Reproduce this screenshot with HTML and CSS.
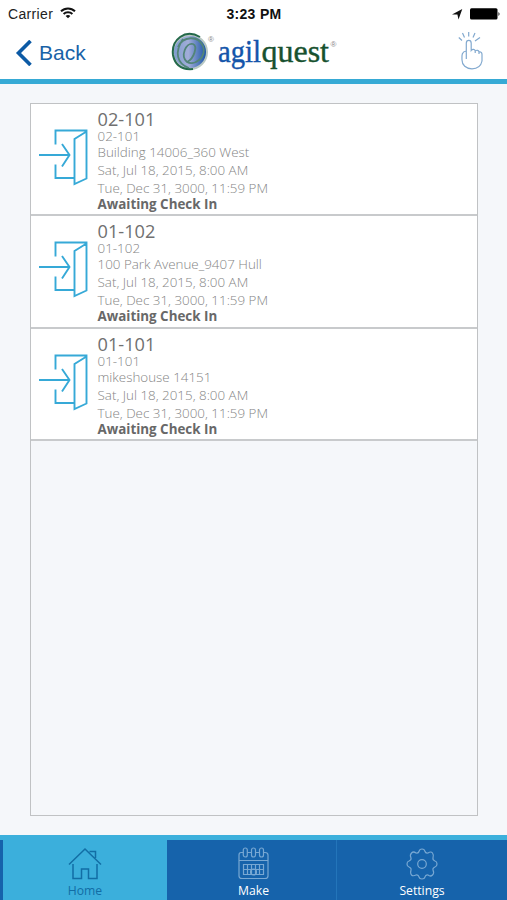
FILE: index.html
```html
<!DOCTYPE html>
<html lang="en">
<head>
<meta charset="utf-8">
<title>Reservations</title>
<link rel="stylesheet" href="styles.css">
</head>
<body>
<svg width="0" height="0" class="defs" aria-hidden="true">
  <symbol id="door" viewBox="0 0 52 60">
    <path d="M17.500 16.500V2.500H48.500V50.500L36.500 56V11L48.500 3.500M17.500 36.500V50H36M1 27H31M24 16L31.500 27L24 38.500"/>
  </symbol>
</svg>
<div class="app">
  <header class="header">
    <div class="status">
      <div class="carrier"><span>Carrier</span>
        <svg width="16" height="12" viewBox="0 0 16 12" fill="none" stroke="#111" stroke-width="2"><path d="M1 4.300C5 .4 11 .4 15 4.300M3.600 7C6 4.700 10 4.700 12.400 7"/><path d="M8 11.300L5.600 9C7 7.800 9 7.800 10.400 9Z" fill="#111" stroke="none"/></svg>
      </div>
      <div class="clock">3:23 PM</div>
      <div class="power">
        <svg width="48" height="14" viewBox="0 0 48 14"><path d="M0 7.400L10.300 2L6.500 12.500L5.400 7.600Z" fill="#111"/><rect x="18" y="1.200" width="27.500" height="11.300" rx="1.500"/><path d="M46.500 5Q48.500 7 46.500 9Z"/></svg>
      </div>
    </div>
    <nav class="nav">
      <a class="back"><svg width="17" height="26" viewBox="0 0 17 26"><path d="M15.500 1L3.500 13L15.500 25" fill="none" stroke="#0c5aa5" stroke-width="3.600"/></svg><span>Back</span></a>
      <svg class="logo" width="170" height="44" viewBox="0 0 170 44">
        <defs><linearGradient id="orb"><stop offset="0" stop-color="#7c9bce"/><stop offset=".45" stop-color="#a2add9"/><stop offset="1" stop-color="#1450a4"/></linearGradient></defs>
        <circle cx="20" cy="22" r="17" fill="url(#orb)" stroke="#b8c8c3" stroke-width="2"/>
        <path d="M30 7C15-2 1 10 3 25C5 35 12 40 23 39" fill="none" stroke="#24694a" stroke-width="2"/>
        <path d="M8 17C13 6 28 5 33 16C37 28 24 36 17 32C10 26 16 12 23 14C28 16 24 29 17 32M13 9C4 22 7 34 19 38" fill="none" stroke="#528578" stroke-width="1.800"/>
        <text class="reg" x="38" y="12">®</text>
        <text class="wordmark" y="32"><tspan x="48" textLength="43" lengthAdjust="spacingAndGlyphs" fill="#1455aa" stroke="#1455aa">agil</tspan><tspan x="91.500" textLength="67.500" lengthAdjust="spacingAndGlyphs" fill="#17512f" stroke="#17512f">quest</tspan></text>
        <text class="reg" x="160.500" y="17">®</text>
      </svg>
      <svg class="tap" width="26" height="40" viewBox="0 0 26 40"><path d="M8.300 28V12.200C8.300 8.500 13.200 8.500 13.200 12.200V19.500C14.500 17.800 17 18 17.200 20C19 18.600 20.800 19.400 21 21C23 20.500 24 21.700 24 23.500V30C23 35 19 37.800 14 37.800C8 37.800 4 34 4 29C4 25 3 21 8.300 20M17.200 20V22M21 21V23M10.700 5.500V1M6.500 6.500L4.500 2M15 6.500L17 2M4 9.500L.8 6.500M17 10L22 6.500"/></svg>
    </nav>
  </header>
  <main class="content">
    <ul class="list">
      <li class="row"><svg class="door"><use href="#door"/></svg><div class="info"><h2>02-101</h2><p class="sub">02-101</p><p>Building 14006_360 West</p><p>Sat, Jul 18, 2015, 8:00 AM</p><p>Tue, Dec 31, 3000, 11:59 PM</p><strong>Awaiting Check In</strong></div></li>
      <li class="row"><svg class="door"><use href="#door"/></svg><div class="info"><h2>01-102</h2><p class="sub">01-102</p><p>100 Park Avenue_9407 Hull</p><p>Sat, Jul 18, 2015, 8:00 AM</p><p>Tue, Dec 31, 3000, 11:59 PM</p><strong>Awaiting Check In</strong></div></li>
      <li class="row"><svg class="door"><use href="#door"/></svg><div class="info"><h2>01-101</h2><p class="sub">01-101</p><p>mikeshouse 14151</p><p>Sat, Jul 18, 2015, 8:00 AM</p><p>Tue, Dec 31, 3000, 11:59 PM</p><strong>Awaiting Check In</strong></div></li>
    </ul>
  </main>
  <footer class="tabs">
    <a class="tab active"><svg width="34" height="34" viewBox="0 0 34 34"><path d="M1 17.500L17 2L33 17.500M5 17V31.500H13.500V22H20.500V31.500H29V17M21.500 4.500H27.500V11"/></svg><span>Home</span></a>
    <a class="tab make"><svg width="34" height="34" viewBox="0 0 34 34"><path d="M6.500 5.500H4Q2 5.500 2 8V29Q2 31.500 5 31.500H28Q31 31.500 31 29V8Q31 5.500 28 5.500H26.500M10 5.500H14.500M18.500 5.500H22.500M2 13.500H31"/><rect x="6.300" y="1" width="4" height="9" rx="2"/><rect x="14.500" y="1" width="4" height="9" rx="2"/><rect x="22.500" y="1" width="4" height="9" rx="2"/><path d="M6.500 17.500H26.500V27.500H6.500ZM6.500 22.500H26.500M10.500 17.500V27.500M14.500 17.500V27.500M18.500 17.500V27.500M22.500 17.500V27.500"/><circle cx="16.500" cy="25" r="3"/></svg><span>Make</span></a>
    <a class="tab settings"><svg width="34" height="34" viewBox="0 0 34 34"><path d="M14 4.500Q14.500 2 17 2T20 4.500Q20.500 6.500 23 6Q26 4 27.500 6T28 11Q27.500 13 30 14Q32 14.500 32 17T30 20Q27.500 21 28 23Q29.500 26 27.500 28T23 28Q20.500 27.500 20 30Q19.500 32 17 32T14 30Q13.500 27.500 11 28Q8 29.500 6.500 28T6 23Q6.500 21 4 20Q2 19.500 2 17T4 14Q6.500 13 6 11Q4.500 8 6.500 6T11 6Q13.500 6.500 14 4.500Z"/><circle cx="17" cy="17" r="4.300"/></svg><span>Settings</span></a>
  </footer>
</div>
</body>
</html>
```
FILE: styles.css
```css
* { box-sizing: border-box; }
body { margin: 0; background: #f5f7fa; font-family: "Open Sans", sans-serif; }
.defs { display: block; height: 0; }
.app { width: 507px; height: 900px; display: flex; flex-direction: column; overflow: hidden; }
.header { height: 84px; flex: none; background: #fff; border-bottom: 5px solid #36aad5; }
.status { height: 28px; display: grid; grid-template-columns: 1fr auto 1fr; align-items: center; padding: 0 7px 0 8px; font: 14px/28px "Liberation Sans", sans-serif; color: #222; }
.carrier { display: flex; align-items: center; gap: 7px; }
.carrier span { letter-spacing: .35px; }
.carrier svg { margin-top: -2px; }
.clock { font-weight: 700; font-size: 14px; letter-spacing: .3px; color: #111; }
.power { display: flex; justify-content: flex-end; }
.power svg { overflow: visible; }
.nav { height: 51px; display: flex; padding: 0 23px 0 15px; align-items: flex-start; }
.back { display: flex; align-items: center; width: 154px; height: 49px; gap: 7px; color: #1962a7; font: 21px "Liberation Sans", sans-serif; }
.logo { margin: 2px 0 0 1px; }
.reg { font: 8px "Liberation Sans", sans-serif; fill: #888; }
.wordmark { font: 31px "Liberation Serif", serif; stroke-width: .4; }
.tap { margin: 3px 0 0 auto; fill: none; stroke: #82a9cf; stroke-width: 1.200; }
.content { flex: 1; padding: 19px 29px 19px 30px; }
.list { height: 713px; margin: 0; padding: 0; list-style: none; border: 1.500px solid #c0c2c4; }
.row { height: 112.400px; display: flex; background: #fff; border-bottom: 2px solid #c8cacc; padding-left: 7px; }
.door { width: 52px; height: 60px; margin-top: 24px; fill: none; stroke: #36a9d7; stroke-width: 1.900; flex: none; }
.info { margin-left: 7.500px; padding-top: 5px; font-size: 13.400px; color: #858585; white-space: nowrap; }
.info h2 { margin: 0; font-size: 18.200px; line-height: 21px; font-weight: 400; color: #707070; }
.info p { margin: 0; line-height: 18px; font-weight: 300; }
.info .sub { line-height: 13px; }
.info strong { display: block; line-height: 14px; color: #686868; font-weight: 700; }
.tabs { height: 65px; flex: none; border-top: 5px solid #3cb0dc; background: #1663ab; display: flex; padding-left: 3px; }
.tab { display: flex; flex-direction: column; align-items: center; color: #fff; font-size: 12.200px; line-height: 16px; padding-top: 7px; flex: none; }
.tab svg { fill: none; stroke: #78a8d3; stroke-width: 1.200; }
.tab span { margin-top: 2px; }
.active { width: 164px; background: #3bafdc; color: #126da5; }
.active svg { stroke: #126ea5; stroke-width: 1.500; }
.make { width: 170px; border-right: 1px solid #2375ba; padding-left: 4px; }
.settings { width: 170px; }
```
